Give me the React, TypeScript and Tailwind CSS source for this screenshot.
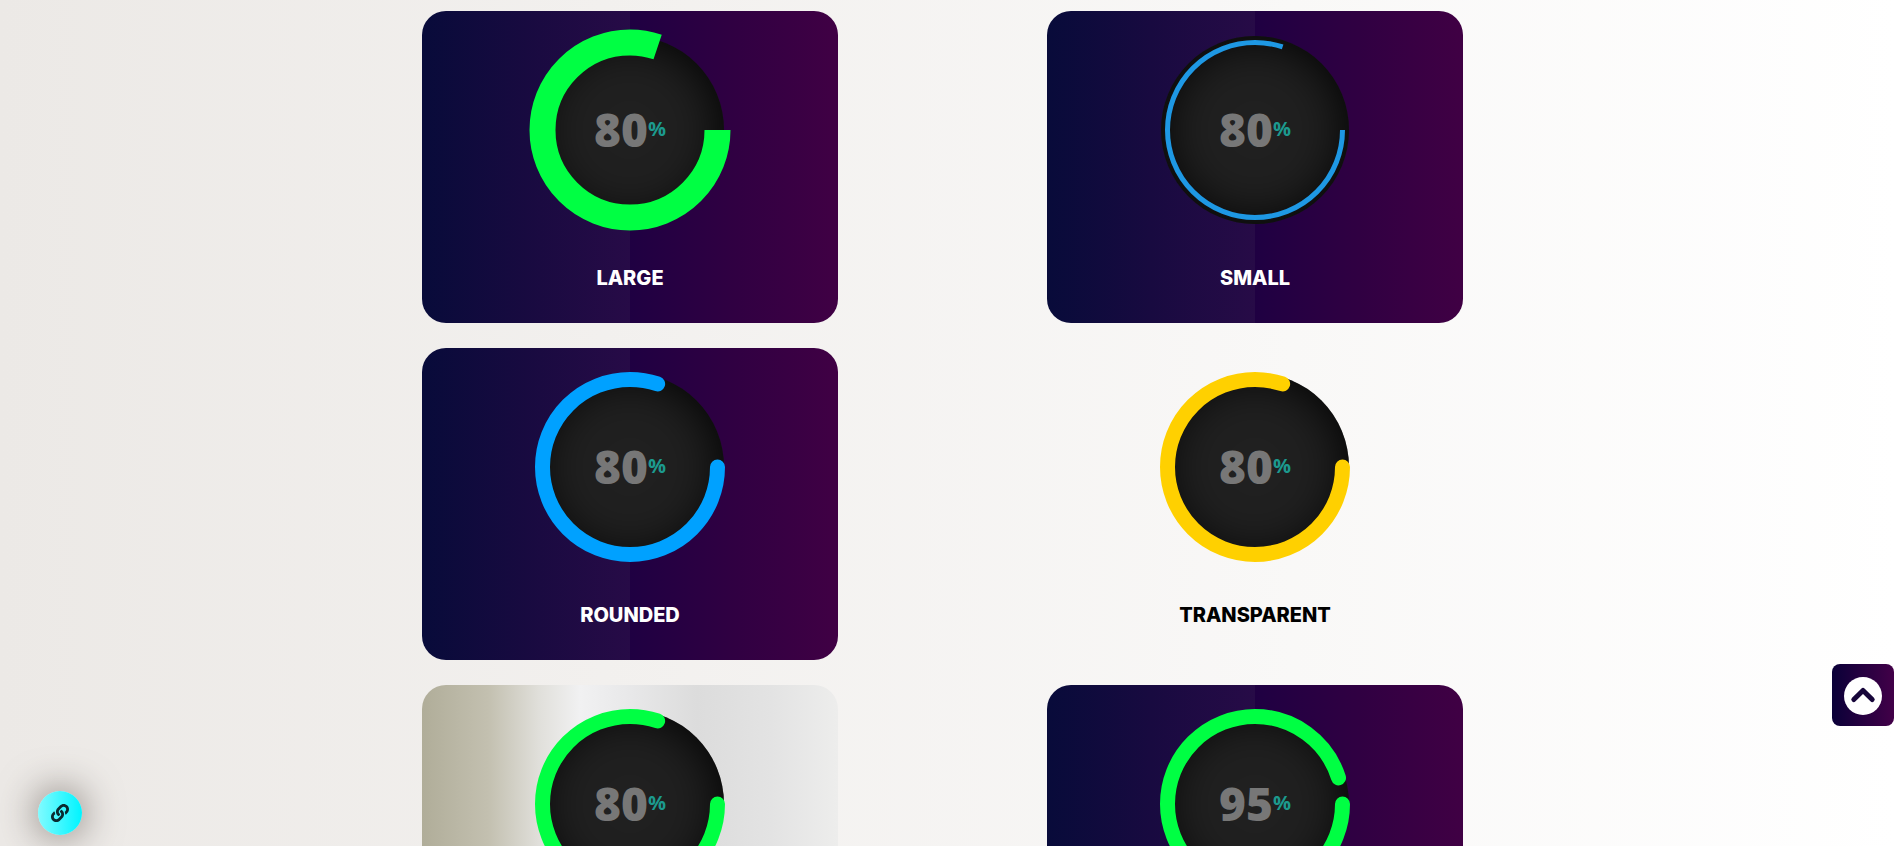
import { FaLink } from "react-icons/fa";

type Meter = {
  label: string;
  value: number;
  color: string;
  stroke: number;
  rounded?: boolean;
  card: string;
  text: string;
};

const RADIUS = 87.5;
const LENGTH = 2 * Math.PI * RADIUS;

const night =
  "bg-[linear-gradient(to_right,#080b3a_0%,#180a40_25%,#270b47_50%,#1f0042_50%,#300042_75%,#400044_100%)]";
const silver =
  "bg-[linear-gradient(to_right,#b0ad99_0%,#c3c0b0_16%,#e0dfda_28%,#f1f1f2_38%,#e8e8e9_50%,#dcdcdc_66%,#e3e3e3_84%,#ededec_100%)]";

const meters: Meter[] = [
  { label: "LARGE", value: 80, color: "#00ff43", stroke: 26, card: night, text: "text-white" },
  { label: "SMALL", value: 80, color: "#1e98e4", stroke: 5, card: night, text: "text-white" },
  { label: "ROUNDED", value: 80, color: "#00a1ff", stroke: 15, rounded: true, card: night, text: "text-white" },
  { label: "TRANSPARENT", value: 80, color: "#ffd000", stroke: 15, rounded: true, card: "", text: "text-black" },
  { label: "GRADIENT", value: 80, color: "#00ff43", stroke: 15, rounded: true, card: silver, text: "text-black" },
  { label: "PERCENT", value: 95, color: "#00ff43", stroke: 15, rounded: true, card: night, text: "text-white" },
];

function MeterCard({ label, value, color, stroke, rounded, card, text }: Meter) {
  return (
    <article className={`flex w-[416px] flex-col items-center rounded-3xl pt-[25px] pb-[29px] ${card}`}>
      <div className="grid place-items-center">
        <svg
          className="col-start-1 row-start-1 size-[188px] overflow-visible rounded-full bg-[#202020] shadow-[inset_0_0_50px_#000000]"
          viewBox="0 0 188 188"
          aria-hidden="true"
        >
          <circle
            cx="94"
            cy="94"
            r={RADIUS}
            fill="none"
            stroke={color}
            strokeWidth={stroke}
            strokeLinecap={rounded ? "round" : "butt"}
            strokeDasharray={`${(LENGTH * value) / 100} ${LENGTH}`}
          />
        </svg>
        <div className="col-start-1 row-start-1 flex items-center pb-0.5 font-['Open_Sans',sans-serif]">
          <span className="text-[46px] leading-none font-extrabold text-[#777777]">{value}</span>
          <span className="text-xl leading-none font-bold text-[#1c9a8e]">%</span>
        </div>
      </div>
      <h2 className={`mt-[38px] text-xl leading-8 font-extrabold ${text}`}>{label}</h2>
    </article>
  );
}

export default function App() {
  return (
    <div className="h-screen overflow-y-auto bg-[linear-gradient(to_right,#ece9e6,#ffffff)] pr-[11px] font-['Inter',sans-serif] [scrollbar-width:none]">
      <main className="mx-auto grid max-w-[1250px] grid-cols-2 justify-items-center gap-y-[25px] py-[11px]">
        {meters.map((meter) => (
          <MeterCard key={meter.label} {...meter} />
        ))}
      </main>
      <a
        href="#links"
        aria-label="Links"
        className="fixed bottom-[11px] left-[38px] flex size-11 items-center justify-center rounded-full bg-[linear-gradient(to_right,#80fbff,#00f4ff)] text-lg text-[#0a2a30] shadow-[0_0_40px_#6f6862]"
      >
        <FaLink />
      </a>
      <button
        type="button"
        aria-label="Back to top"
        className="fixed right-0.5 bottom-[120px] flex size-[62px] items-center justify-center rounded-lg bg-[linear-gradient(to_right,#0a0038,#420048)] pt-0.5"
      >
        <svg className="size-[38px]" viewBox="0 0 38 38" aria-hidden="true">
          <circle cx="19" cy="19" r="19" fill="#ffffff" />
          <path
            d="M9.8 22.6 19 13.4l9.2 9.2"
            fill="none"
            stroke="#17063a"
            strokeWidth="5"
            strokeLinecap="round"
            strokeLinejoin="round"
          />
        </svg>
      </button>
    </div>
  );
}
